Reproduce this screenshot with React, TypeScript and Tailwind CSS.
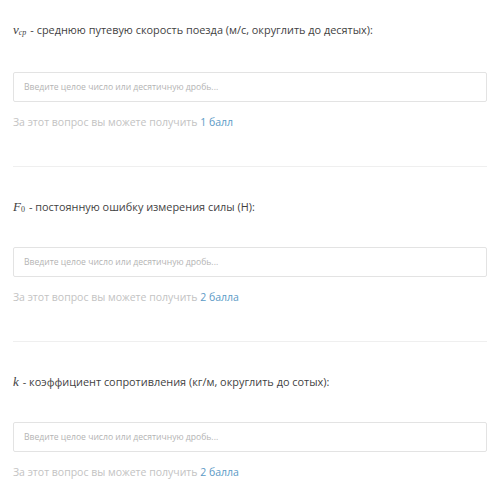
const questions = [
  {
    symbol: (
      <span className="font-['Liberation_Serif',serif] italic text-[13px]">
        v<sub className="text-[8px] relative top-[1px]">ср</sub>
      </span>
    ),
    label: "- среднюю путевую скорость поезда (м/с, округлить до десятых):",
    points: "1 балл",
    top: "pt-[22px]",
    gap: "mt-[34px]",
  },
  {
    symbol: (
      <span className="font-['Liberation_Serif',serif] italic text-[13px]">
        F<sub className="text-[8px] not-italic relative top-[1px]">0</sub>
      </span>
    ),
    label: "- постоянную ошибку измерения силы (Н):",
    points: "2 балла",
    top: "pt-[32px]",
    gap: "mt-[32px]",
  },
  {
    symbol: <span className="font-['Liberation_Serif',serif] italic text-[13px]">k</span>,
    label: "- коэффициент сопротивления (кг/м, округлить до сотых):",
    points: "2 балла",
    top: "pt-[32px]",
    gap: "mt-[32px]",
  },
];

export default function App() {
  return (
    <div className="w-[500px] h-[498px] overflow-hidden bg-white px-[13px] font-['Open_Sans',sans-serif]">
      {questions.map((q, i) => (
        <div
          key={i}
          className={`${q.top} pb-[36px] ${i > 0 ? "border-t border-[#efefef]" : ""}`}
        >
          {/* Question */}
          <div className="flex items-baseline gap-[4px] h-[16px] leading-[16px] text-[10.9px] text-[#3f3f3f]">
            {q.symbol}
            <span>{q.label}</span>
          </div>

          {/* Answer input */}
          <div
            className={`${q.gap} h-[30px] border border-[#e3e3e3] rounded-[2px] flex items-center px-[10px] text-[8.6px] text-[#b4b4b4]`}
          >
            Введите целое число или десятичную дробь...
          </div>

          {/* Points */}
          <div className="mt-[12px] h-[16px] leading-[16px] text-[10.5px] text-[#c3c3c3]">
            За этот вопрос вы можете получить{" "}
            <span className="text-[#5b9ac6]">{q.points}</span>
          </div>
        </div>
      ))}
    </div>
  );
}
